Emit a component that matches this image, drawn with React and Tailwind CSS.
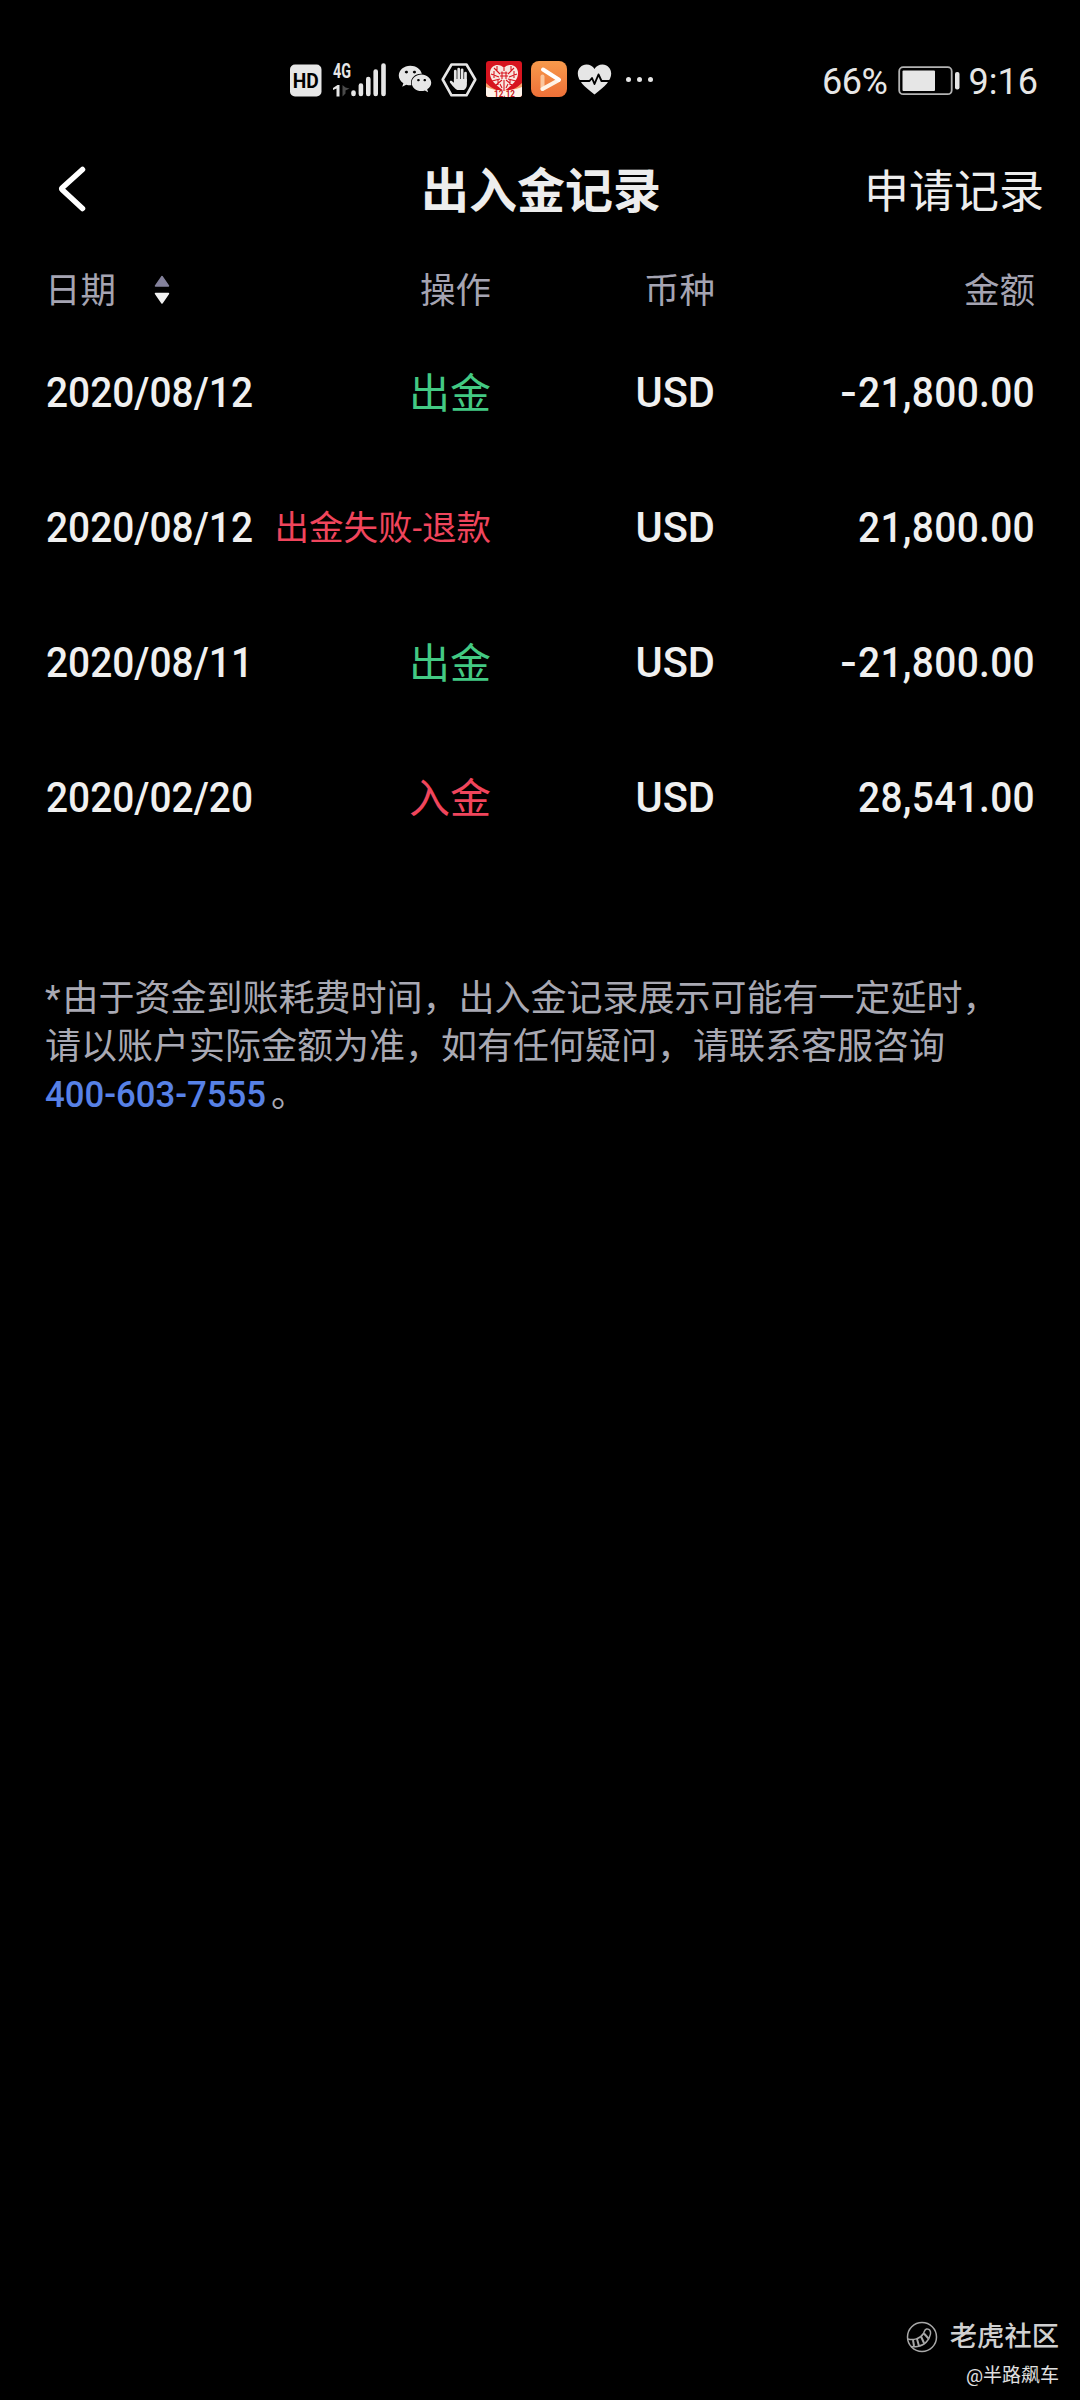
import { FaWeixin } from "react-icons/fa";

const RECORDS = [
  { date: "2020/08/12", action: "出金", currency: "USD", amount: "-21,800.00", tone: "text-[#43c983]" },
  { date: "2020/08/12", action: "出金失败-退款", currency: "USD", amount: "21,800.00", tone: "text-[#f0455c]", small: true },
  { date: "2020/08/11", action: "出金", currency: "USD", amount: "-21,800.00", tone: "text-[#43c983]" },
  { date: "2020/02/20", action: "入金", currency: "USD", amount: "28,541.00", tone: "text-[#f0455c]" },
];

const COLS = "grid grid-cols-[226px_220px_224px_320px] items-center pl-[45px]";
const DIGITS = "font-['Roboto'] font-medium text-[42px]";

function HdIcon() {
  return (
    <svg width="32" height="36" viewBox="0 0 32 36">
      <rect x="0" y="3.5" width="31.5" height="32" rx="5" fill="#e6e6e6" />
      <text x="15.8" y="26.5" textAnchor="middle" textLength="26" lengthAdjust="spacingAndGlyphs" fontFamily="Roboto" fontWeight="700" fontSize="20" fill="#000">
        HD
      </text>
    </svg>
  );
}

function SignalIcon() {
  return (
    <svg className="overflow-visible" width="55" height="36" viewBox="0 0 55 36">
      <text x="1" y="16.5" textLength="18" lengthAdjust="spacingAndGlyphs" fontFamily="Roboto" fontWeight="700" fontSize="20" fill="#e6e6e6">
        4G
      </text>
      <path d="M1 27l4.500-3H7.500v11.500H4.500v-8L1 29z" fill="#e6e6e6" />
      <path d="M10.500 24v11.500l3-3v-3l4-2-4-1z" fill="#4a4a4a" />
      <path d="M21.500 31.500v1.500M28.900 24.500v8.500M36.300 18v15M43.700 10.500v22.500M51.500 4.500v28.500" stroke="#e6e6e6" strokeWidth="4.6" strokeLinecap="round" />
    </svg>
  );
}

function HandIcon() {
  return (
    <svg width="36" height="36" viewBox="0 0 36 36">
      <path d="M10.500 3.500h15L34.300 18.500 25.500 34.300h-15L1.700 18.500z" fill="none" stroke="#e6e6e6" strokeWidth="2.6" strokeLinejoin="round" />
      <path d="M14.300 20V10M17.700 19V8M21.100 19V8.800M24.500 20v-8" stroke="#e6e6e6" strokeWidth="2.7" strokeLinecap="round" fill="none" />
      <path d="M12.900 18h13v5.500c0 3-1.500 4.500-3 5.500h-6.500c-2.500-1-5.500-5-7.500-7.500-.5-1.500 1-2.200 2.200-1.200l1.800 1.500z" fill="#e6e6e6" />
    </svg>
  );
}

function SaleIcon() {
  return (
    <svg className="overflow-visible" width="36" height="36" viewBox="0 0 36 36">
      <defs>
        <clipPath id="sale">
          <rect width="36" height="36" rx="3" />
        </clipPath>
      </defs>
      <g clipPath="url(#sale)">
        <rect width="36" height="36" fill="#d7141f" />
        <path d="M0 22q5 5 10 7h16q5-2 10-7v14H0z" fill="#f6a06a" />
        <path d="M0 26q8 3.500 18 3.500t18-3.500v10H0z" fill="#fff4ec" />
        <path d="M18 30C8 23 3.500 18 4 11 5 3 14 2 18 7c4-5 13-4 14 4 .5 7-4 12-14 19z" fill="#f8e6e0" />
        <g stroke="#d7141f" strokeWidth="1.100" fill="none">
          <path d="M18 7v3M18 19v11M8 7l6 6M5 13l8 3M6 20l8-2M10 24l6-5M28 7l-6 6M31 13l-8 3M30 20l-8-2M26 24l-6-5M11 5v5M25 5v5M8 10v7M28 10v7M12 19v5M24 19v5M14 23l2 4M22 23l-2 4" />
          <path d="M14.500 12h7M14 15h8M16 10.500v7.500M20 10.500v7.500" />
        </g>
      </g>
      <text x="18.500" y="35.800" textAnchor="middle" textLength="21" lengthAdjust="spacingAndGlyphs" fontFamily="Roboto" fontWeight="700" fontSize="9" fill="#c4161c">
        12.12
      </text>
    </svg>
  );
}

function VideoIcon() {
  return (
    <svg width="36" height="36" viewBox="0 0 36 36">
      <defs>
        <linearGradient id="video" x1="0" y1="0" x2="0" y2="1">
          <stop offset="0" stopColor="#f79a4c" />
          <stop offset="1" stopColor="#ee7038" />
        </linearGradient>
      </defs>
      <rect width="36" height="36" rx="8" fill="url(#video)" />
      <g fill="none" strokeWidth="4" strokeLinecap="round" strokeLinejoin="round">
        <path d="M11.500 15.500v12.500" stroke="#fbc69d" />
        <path d="M11.500 28L27 19.500" stroke="#fff3e6" />
        <path d="M12 8.500l16 10.300" stroke="#fff" />
      </g>
    </svg>
  );
}

function HealthIcon() {
  return (
    <svg width="35" height="36" viewBox="0 0 35 36">
      <path d="M17.500 33.500C7 25.500.8 19.500.8 12.500c0-5 3.800-9 8.700-9 3.500 0 6.300 1.700 8 4.500 1.700-2.800 4.500-4.500 8-4.500 4.900 0 8.700 4 8.700 9 0 7-6.200 13-16.700 21z" fill="#e6e6e6" />
      <path d="M1 20h11.500l2.500-3 2.500 6 4-9.500 3 6.500H34" fill="none" stroke="#000" strokeWidth="1.900" strokeLinejoin="round" />
    </svg>
  );
}

function BatteryIcon() {
  return (
    <svg width="62" height="30" viewBox="0 0 62 30">
      <rect x="1.200" y="1.200" width="52.500" height="27" rx="4" fill="none" stroke="#b4b4b4" strokeWidth="1.800" />
      <rect x="4.500" y="4.500" width="32.500" height="20.500" rx="1" fill="#e6e6e6" />
      <rect x="57" y="6" width="4.500" height="17.500" rx="2" fill="#e6e6e6" />
    </svg>
  );
}

function StatusBar() {
  return (
    <div className="flex h-[158px] items-center pl-[290px] pr-[42px] text-[#e6e6e6]">
      <HdIcon />
      <div className="ml-[10px]"><SignalIcon /></div>
      <FaWeixin className="ml-[11px] size-[34px]" />
      <div className="ml-[9px]"><HandIcon /></div>
      <div className="ml-[9px]"><SaleIcon /></div>
      <div className="ml-[9px]"><VideoIcon /></div>
      <div className="ml-[10px]"><HealthIcon /></div>
      <div className="ml-[14px] flex gap-[6px]">
        <span className="size-[5px] rounded-full bg-[#e6e6e6]" />
        <span className="size-[5px] rounded-full bg-[#e6e6e6]" />
        <span className="size-[5px] rounded-full bg-[#e6e6e6]" />
      </div>
      <div className="ml-auto flex items-center font-['Roboto'] text-[36px] leading-none">
        <span className="mt-[6px] tracking-[-0.4px]">66%</span>
        <div className="ml-[10px] mr-[9px] mt-[3px]"><BatteryIcon /></div>
        <span className="mt-[6px]">9:16</span>
      </div>
    </div>
  );
}

function NavBar() {
  return (
    <div className="grid h-16 grid-cols-[1fr_auto_1fr] items-center pl-[57px] pr-[36px] text-[#ededed]">
      <svg className="-mt-[3px]" width="30" height="46" viewBox="0 0 30 46">
        <path d="M25.500 3.500L5 22a1 1 0 0 0 0 1.500L25.500 42.500" fill="none" stroke="#fff" strokeWidth="5.500" strokeLinecap="round" strokeLinejoin="round" />
      </svg>
      <h1 className="-ml-[19px] mt-[4px] text-[48px] font-bold leading-none">出入金记录</h1>
      <span className="mt-[4px] justify-self-end text-[45px] leading-none">申请记录</span>
    </div>
  );
}

function SortIcon() {
  return (
    <svg className="-mt-[4px]" width="16" height="30" viewBox="0 0 16 30">
      <path d="M8 1.500l6.500 9.500h-13z" fill="#84829c" stroke="#84829c" strokeWidth="1.500" strokeLinejoin="round" />
      <path d="M8 28l6.500-9.500h-13z" fill="#f2f2f2" stroke="#f2f2f2" strokeWidth="1.500" strokeLinejoin="round" />
    </svg>
  );
}

function Amount({ value }) {
  const negative = value.startsWith("-");
  return (
    <span className={`${DIGITS} origin-right scale-x-[0.925] text-right tracking-[0.35px]`}>
      {negative && <span className="mr-[1px] inline-block origin-right scale-x-125">-</span>}
      {negative ? value.slice(1) : value}
    </span>
  );
}

export default function App() {
  return (
    <div className="flex h-[2400px] w-[1080px] flex-col bg-black font-['Roboto','Noto_Sans_CJK_SC',sans-serif]">
      <StatusBar />
      <NavBar />

      <div className={`${COLS} mt-[33px] h-[70px] pt-[4px] text-[35.500px] leading-none text-[#a5a4b2]`}>
        <div className="flex items-center gap-[38px]">
          <span>日期</span>
          <SortIcon />
        </div>
        <span className="text-right">操作</span>
        <span className="text-right">币种</span>
        <span className="text-right">金额</span>
      </div>

      {RECORDS.map((r, i) => (
        <div key={i} className={`${COLS} h-[135px] whitespace-nowrap leading-none text-[#f0f0f0]`}>
          <span className={`${DIGITS} ml-[1px] origin-left scale-x-[0.925]`}>{r.date}</span>
          <span className={`text-right ${r.tone} ${r.small ? "pt-[1px] text-[34.500px]" : "pt-[3px] text-[41px]"}`}>{r.action}</span>
          <span className={`${DIGITS} origin-right scale-x-[0.99] text-right`}>{r.currency}</span>
          <Amount value={r.amount} />
        </div>
      ))}

      <div className="mt-[110px] whitespace-nowrap pl-[45px] text-[36px] leading-[48px] text-[#a9a9b3]">
        <p>
          <span className="mr-[2px]">*</span>
          由于资金到账耗费时间，出入金记录展示可能有一定延时，
        </p>
        <p>请以账户实际金额为准，如有任何疑问，请联系客服咨询</p>
        <p>
          <span className="inline-block origin-left scale-x-[0.965] font-medium text-[#5781e6]">400-603-7555</span>
          <span className="-ml-[3px]">。</span>
        </p>
      </div>

      <div className="mt-auto flex flex-col items-end pb-[15px] pr-[21px] text-[#d0d0d0]">
        <div className="flex items-center gap-[12px]">
          <svg width="32" height="32" viewBox="0 0 32 32" fill="none" stroke="#a8a8a8" strokeWidth="1.500">
            <circle cx="16" cy="16" r="14.500" />
            <path d="M2 18c5 1.500 12 0 15.500-5.500 1-2 1-4 3-4.500 3-.5 4.500 2 4 5-1 6-6 11.500-13 12.500-3 .5-5 .3-6.500 0" />
            <path d="M7 19l1 6M11 18l2 7M15 15.500l3 6.500M18 12.500l4.500 5" strokeWidth="2" />
          </svg>
          <span className="pt-[2px] text-[27.300px] font-medium leading-none">老虎社区</span>
        </div>
        <span className="mt-[13px] text-[19px] leading-none text-[#e0e0e0]">@半路飙车</span>
      </div>
    </div>
  );
}
